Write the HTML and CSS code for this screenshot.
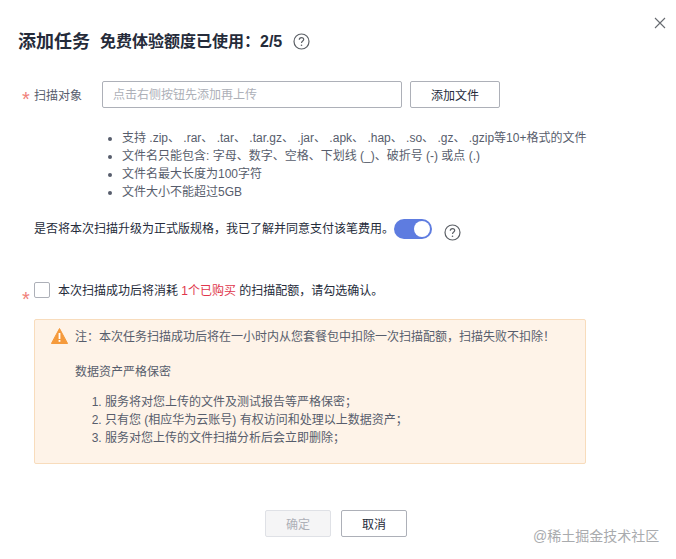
FILE: index.html
```html
<!DOCTYPE html>
<html lang="zh-CN">
<head>
    <meta charset="UTF-8">
    <title>添加任务</title>
    <link rel="stylesheet" href="styles.css">
</head>
<body>
    <div class="dialog">
        <svg class="close" width="12" height="12" viewBox="0 0 12 12"><path d="M1 1L11 11M11 1L1 11" stroke="#666a70" stroke-width="1.1" fill="none"/></svg>

        <div class="header">
            <span class="title">添加任务</span>
            <span class="quota">免费体验额度已使用：2/5</span>
            <svg class="help help-title" width="17" height="17" viewBox="0 0 17 17"><circle cx="8.5" cy="8.5" r="7.5" stroke="#5c6066" stroke-width="1.2" fill="none"/><path d="M6.3 6.8C6.3 5.5 7.3 4.7 8.5 4.7C9.7 4.7 10.7 5.5 10.7 6.6C10.7 8 8.5 8.2 8.5 10" stroke="#5c6066" stroke-width="1.2" fill="none"/><circle cx="8.5" cy="12.2" r="0.8" fill="#5c6066"/></svg>
        </div>

        <div class="field">
            <span class="star">*</span>
            <label class="field-label">扫描对象</label>
            <input class="text-input" type="text" placeholder="点击右侧按钮先添加再上传">
            <button class="btn btn-file">添加文件</button>
        </div>

        <ul class="rules">
            <li>支持 .zip、 .rar、 .tar、 .tar.gz、 .jar、 .apk、 .hap、 .so、 .gz、 .gzip等10+格式的文件</li>
            <li>文件名只能包含: 字母、数字、空格、下划线 (_)、破折号 (-) 或点 (.)</li>
            <li>文件名最大长度为100字符</li>
            <li>文件大小不能超过5GB</li>
        </ul>

        <div class="upgrade">
            <span class="upgrade-text">是否将本次扫描升级为正式版规格，我已了解并同意支付该笔费用。</span>
            <span class="switch"><span class="knob"></span></span>
            <svg class="help help-upgrade" width="17" height="17" viewBox="0 0 17 17"><circle cx="8.5" cy="8.5" r="7.5" stroke="#5c6066" stroke-width="1.2" fill="none"/><path d="M6.3 6.8C6.3 5.5 7.3 4.7 8.5 4.7C9.7 4.7 10.7 5.5 10.7 6.6C10.7 8 8.5 8.2 8.5 10" stroke="#5c6066" stroke-width="1.2" fill="none"/><circle cx="8.5" cy="12.2" r="0.8" fill="#5c6066"/></svg>
        </div>

        <div class="confirm">
            <span class="star star-confirm">*</span>
            <span class="checkbox"></span>
            <span class="confirm-text">本次扫描成功后将消耗 <span class="red">1个已购买</span> 的扫描配额，请勾选确认。</span>
        </div>

        <div class="alert">
            <svg class="warn" width="17" height="16" viewBox="0 0 17 16"><path d="M8.5 0.5L16.6 15.5H0.4Z" fill="#f59a3c" stroke="#f59a3c" stroke-linejoin="round"/><rect x="7.6" y="5" width="1.8" height="6" fill="#fff"/><rect x="7.6" y="12" width="1.8" height="1.8" fill="#fff"/></svg>
            <div class="alert-body">
                <p class="alert-note">注：本次任务扫描成功后将在一小时内从您套餐包中扣除一次扫描配额，扫描失败不扣除！</p>
                <p class="alert-head">数据资产严格保密</p>
                <ol class="alert-list">
                    <li>服务将对您上传的文件及测试报告等严格保密；</li>
                    <li>只有您 (相应华为云账号) 有权访问和处理以上数据资产；</li>
                    <li>服务对您上传的文件扫描分析后会立即删除；</li>
                </ol>
            </div>
        </div>

        <div class="footer">
            <button class="btn btn-ok" disabled>确定</button>
            <button class="btn btn-cancel">取消</button>
        </div>

        <span class="watermark">@稀土掘金技术社区</span>
    </div>
</body>
</html>
```

FILE: styles.css
```css
html, body {
    margin: 0;
    height: 100%;
    background-color: #fff;
}
.dialog {
    position: relative;
    box-sizing: border-box;
    width: 676px;
    height: 559px;
    overflow: hidden;
    padding: 29px 0 0 18px;
    font-family: "Liberation Sans", "Noto Sans CJK SC", sans-serif;
    font-size: 12px;
    color: #575d6c;
}
.close {
    position: absolute;
    top: 17px;
    left: 654px;
}
.header {
    display: flex;
    align-items: center;
    height: 21px;
}
.title {
    font-size: 18px;
    font-weight: bold;
    color: #252b3a;
}
.quota {
    margin-left: 10px;
    font-size: 16px;
    font-weight: bold;
    color: #252b3a;
}
.help-title {
    margin: 3px 0 0 11px;
}
.field {
    display: flex;
    align-items: center;
    height: 27px;
    margin-top: 31px;
    padding-left: 4px;
}
.star {
    width: 12px;
    font-size: 20px;
    line-height: 16px;
    color: #f0807a;
    padding-top: 8px;
}
.field-label {
    width: 68px;
    color: #575d6c;
}
.text-input {
    box-sizing: border-box;
    width: 300px;
    height: 27px;
    padding: 0 10px;
    border: 1px solid #adb0b8;
    border-radius: 2px;
    font-family: inherit;
    font-size: 12px;
    outline: none;
}
.text-input::placeholder {
    color: #adb0b8;
}
.btn {
    box-sizing: border-box;
    height: 27px;
    padding: 0;
    border: 1px solid #adb0b8;
    border-radius: 2px;
    background-color: #fff;
    font-family: inherit;
    font-size: 12px;
    color: #252b3a;
}
.btn-file {
    width: 90px;
    margin-left: 8px;
}
.rules {
    margin: 21px 0 0;
    padding: 0 0 0 104px;
    line-height: 18px;
    color: #575d6c;
    list-style: disc;
}
.upgrade {
    display: flex;
    align-items: center;
    height: 20px;
    margin-top: 18px;
    padding-left: 16px;
}
.upgrade-text {
    width: 360px;
    margin-top: -4px;
    color: #252b3a;
    white-space: nowrap;
}
.switch {
    display: flex;
    justify-content: flex-end;
    align-items: center;
    box-sizing: border-box;
    width: 38px;
    height: 20px;
    padding-right: 2px;
    border-radius: 10px;
    background-color: #5e7ce0;
}
.knob {
    width: 16px;
    height: 16px;
    border-radius: 50%;
    background-color: #fff;
}
.help-upgrade {
    margin: 6px 0 0 12px;
}
.confirm {
    display: flex;
    align-items: flex-start;
    height: 16px;
    margin-top: 43px;
    padding-left: 4px;
}
.star-confirm {
    padding-top: 9px;
}
.checkbox {
    box-sizing: border-box;
    width: 16px;
    height: 16px;
    border: 1px solid #adb0b8;
    border-radius: 2px;
    background-color: #fff;
}
.confirm-text {
    margin-left: 8px;
    line-height: 18px;
    color: #252b3a;
    white-space: nowrap;
}
.red {
    color: #e0364c;
}
.alert {
    display: flex;
    box-sizing: border-box;
    width: 552px;
    height: 145px;
    margin: 21px 0 0 16px;
    padding: 8px 0 0 16px;
    border: 1px solid #f8dcbc;
    border-radius: 2px;
    background-color: #fef3e8;
    color: #575d6c;
}
.warn {
    flex: none;
}
.alert-body {
    margin-left: 7px;
    white-space: nowrap;
}
.alert-note, .alert-head {
    margin: 0;
    line-height: 18px;
}
.alert-head {
    margin-top: 17px;
}
.alert-list {
    margin: 12px 0 0;
    padding-left: 30px;
    line-height: 18px;
}
.footer {
    display: flex;
    gap: 10px;
    margin: 46px 0 0 247px;
}
.btn-ok, .btn-cancel {
    width: 66px;
}
.btn-ok {
    border-color: #dfe1e6;
    background-color: #f5f5f6;
    color: #adb0b8;
}
.watermark {
    position: absolute;
    top: 527px;
    left: 533px;
    font-size: 14px;
    line-height: 18px;
    color: #a9abae;
    white-space: nowrap;
}
```
